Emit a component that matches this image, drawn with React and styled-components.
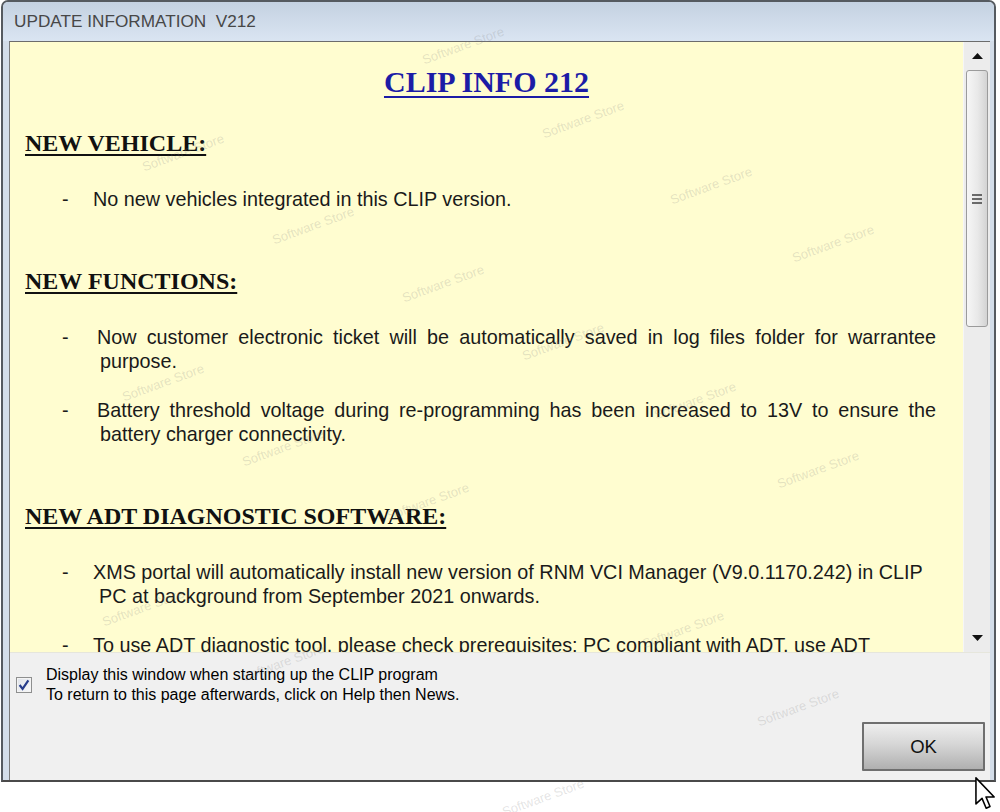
import React from 'react'
import styled, { createGlobalStyle } from 'styled-components'

const GlobalStyle = createGlobalStyle`
  html, body { margin: 0; padding: 0; background: #ffffff; }
  body { width: 1000px; height: 812px; overflow: hidden; position: relative; }
`

const Window = styled.div`
  box-sizing: border-box;
  width: 995px;
  height: 782px;
  margin-left: 1px;
  border: 2px solid #555a60;
  border-bottom-color: #4a4a4a;
  border-radius: 7px 7px 0 0;
  background: #d3dde9;
  display: flex;
  flex-direction: column;
`

const TitleBar = styled.div`
  height: 39px;
  flex: none;
  display: flex;
  align-items: center;
  padding-left: 11px;
  border-radius: 5px 5px 0 0;
  background: linear-gradient(#c4d1e1, #dae5f2);
  font-family: "Liberation Sans", Arial, sans-serif;
  font-size: 17.2px;
  color: #474747;
  white-space: pre;
`

const Client = styled.div`
  flex: 1;
  margin: 0 4px 0 6px;
  border-top: 1px solid #6c6c6c;
  border-left: 1px solid #7a7a7a;
  display: flex;
  flex-direction: column;
  background: #f0f0f0;
`

const ScrollArea = styled.div`
  height: 610px;
  flex: none;
  display: flex;
  border-bottom: 1px solid #e6e6dc;
`

const Doc = styled.div`
  flex: 1;
  overflow: hidden;
  background: #fffdd0;
  padding: 22px 27px 0 15px;
  color: #1a1a1a;
`

const Title = styled.h1`
  margin: 0;
  padding-left: 12px;
  text-align: center;
  font-family: "Liberation Serif", "Times New Roman", serif;
  font-weight: bold;
  font-size: 30px;
  line-height: 36px;
  color: #1c1ca6;
  text-decoration: underline;
  text-decoration-thickness: 2px;
  text-underline-offset: 4px;
`

const Heading = styled.h2`
  margin: 55px 0 29px;
  font-family: "Liberation Serif", "Times New Roman", serif;
  font-weight: bold;
  font-size: 24px;
  line-height: 30px;
  color: #111;
  text-decoration: underline;
  text-decoration-thickness: 2px;
  text-underline-offset: 3px;

  ${Title} + & {
    margin-top: 28px;
  }
`

const Bullet = styled.div`
  display: grid;
  grid-template-columns: ${p => p.$indent}px 1fr;
  margin: 0 0 25px 37px;
  font-family: "Liberation Sans", Arial, sans-serif;
  font-size: 19.8px;
  line-height: 24px;
`

const Dash = styled.span``

const Lines = styled.div`
  display: flex;
  flex-direction: column;
`

const Line = styled.span`
  white-space: nowrap;
  padding-left: ${p => p.$pad || 0}px;
  text-align: ${p => (p.$justify ? 'justify' : 'left')};
  text-align-last: ${p => (p.$justify ? 'justify' : 'left')};
  ${p => p.$justify && 'white-space: normal;'}
`

const Scrollbar = styled.div`
  width: 27px;
  flex: none;
  display: flex;
  flex-direction: column;
  background: #ececec;
  border-left: 1px solid #f6f6f6;
  box-sizing: border-box;
`

const ArrowButton = styled.div`
  height: 28px;
  flex: none;
  display: flex;
  align-items: center;
  justify-content: center;
`

const Track = styled.div`
  flex: 1;
`

const Thumb = styled.div`
  height: 255px;
  margin: 0 2px 0 2px;
  border: 1px solid #9b9b9b;
  border-radius: 3px;
  background: linear-gradient(90deg, #f6f6f6, #e8e8e8 55%, #d3d3d3);
  display: flex;
  align-items: center;
  justify-content: center;
`

const Footer = styled.div`
  flex: 1;
  display: flex;
  flex-direction: column;
  padding: 12px 5px 9px 6px;
  font-family: "Liberation Sans", Arial, sans-serif;
  font-size: 16px;
  line-height: 20px;
  color: #000;
`

const CheckRow = styled.label`
  display: flex;
  gap: 14px;
  align-items: flex-start;
`

const Box = styled.span`
  width: 14px;
  height: 14px;
  margin-top: 12px;
  border: 1px solid #8e8f8f;
  background: linear-gradient(135deg, #dfe3ea, #f7f8fa);
  display: flex;
  align-items: center;
  justify-content: center;
  box-shadow: inset 0 0 0 1px #f4f4f4;
`

const ButtonRow = styled.div`
  margin-top: auto;
  display: flex;
  justify-content: flex-end;
`

const OkButton = styled.button`
  width: 123px;
  height: 49px;
  box-sizing: border-box;
  border: 2px solid #6f6f6f;
  border-radius: 1px;
  background: linear-gradient(#eeeeee, #d6d6d6 45%, #b0b0b0);
  font-family: "Liberation Sans", Arial, sans-serif;
  font-size: 18.5px;
  color: #111;
  padding: 0;
`

const Mark = styled.span`
  position: absolute;
  left: ${p => p.$x}px;
  top: ${p => p.$y}px;
  transform: rotate(-20deg);
  font-family: "Liberation Sans", Arial, sans-serif;
  font-size: 13px;
  color: rgba(130, 130, 130, 0.22);
  pointer-events: none;
  white-space: nowrap;
`

const Cursor = styled.svg`
  position: absolute;
  left: 975px;
  top: 777px;
`

const marks = [
  [420, 38], [140, 145], [540, 112], [668, 178], [270, 218], [790, 236],
  [400, 276], [520, 334], [120, 375], [652, 393], [240, 440], [775, 462],
  [385, 494], [100, 600], [640, 622], [240, 655], [755, 700], [500, 790],
]

const UpArrow = () => (
  <svg width="11" height="6" viewBox="0 0 11 6">
    <path d="M0 6 L5.5 0 L11 6 Z" fill="#111" />
  </svg>
)

const DownArrow = () => (
  <svg width="11" height="6" viewBox="0 0 11 6">
    <path d="M0 0 L11 0 L5.5 6 Z" fill="#111" />
  </svg>
)

const Grip = () => (
  <svg width="12" height="12" viewBox="0 0 12 12">
    <g stroke="#333" strokeWidth="1.4">
      <line x1="1" y1="2" x2="11" y2="2" />
      <line x1="1" y1="6" x2="11" y2="6" />
      <line x1="1" y1="10" x2="11" y2="10" />
    </g>
  </svg>
)

export default function App() {
  return (
    <>
      <GlobalStyle />
      <Window>
        <TitleBar>UPDATE INFORMATION  V212</TitleBar>
        <Client>
          <ScrollArea>
            <Doc>
              <Title>CLIP INFO 212</Title>

              <Heading>NEW VEHICLE:</Heading>
              <Bullet $indent={31}>
                <Dash>-</Dash>
                <Lines>
                  <Line>No new vehicles integrated in this CLIP version.</Line>
                </Lines>
              </Bullet>

              <Heading>NEW FUNCTIONS:</Heading>
              <Bullet $indent={35}>
                <Dash>-</Dash>
                <Lines>
                  <Line $justify>Now customer electronic ticket will be automatically saved in log files folder for warrantee</Line>
                  <Line $pad={3}>purpose.</Line>
                </Lines>
              </Bullet>
              <Bullet $indent={35}>
                <Dash>-</Dash>
                <Lines>
                  <Line $justify>Battery threshold voltage during re-programming has been increased to 13V to ensure the</Line>
                  <Line $pad={3}>battery charger connectivity.</Line>
                </Lines>
              </Bullet>

              <Heading>NEW ADT DIAGNOSTIC SOFTWARE:</Heading>
              <Bullet $indent={31}>
                <Dash>-</Dash>
                <Lines>
                  <Line>XMS portal will automatically install new version of RNM VCI Manager (V9.0.1170.242) in CLIP</Line>
                  <Line $pad={6}>PC at background from September 2021 onwards.</Line>
                </Lines>
              </Bullet>
              <Bullet $indent={31}>
                <Dash>-</Dash>
                <Lines>
                  <Line>To use ADT diagnostic tool, please check prerequisites: PC compliant with ADT, use ADT</Line>
                </Lines>
              </Bullet>
            </Doc>
            <Scrollbar>
              <ArrowButton><UpArrow /></ArrowButton>
              <Thumb><Grip /></Thumb>
              <Track />
              <ArrowButton><DownArrow /></ArrowButton>
            </Scrollbar>
          </ScrollArea>
          <Footer>
            <CheckRow>
              <Box>
                <svg width="12" height="12" viewBox="0 0 11 11">
                  <path d="M1.5 5.5 L4.2 9 L9.5 1.2" fill="none" stroke="#263c8c" strokeWidth="2" />
                </svg>
              </Box>
              <span>
                Display this window when starting up the CLIP program
                <br />
                To return to this page afterwards, click on Help then News.
              </span>
            </CheckRow>
            <ButtonRow>
              <OkButton>OK</OkButton>
            </ButtonRow>
          </Footer>
        </Client>
      </Window>
      {marks.map(([x, y], i) => (
        <Mark key={i} $x={x} $y={y}>Software Store</Mark>
      ))}
      <Cursor width="21" height="33" viewBox="0 0 12 19">
        <path d="M0.5 0.5 L0.5 15.5 L4 12.3 L6.4 18 L8.6 17 L6.3 11.5 L11 11.5 Z" fill="#fff" stroke="#000" strokeWidth="0.9" strokeLinejoin="round" />
      </Cursor>
    </>
  )
}
